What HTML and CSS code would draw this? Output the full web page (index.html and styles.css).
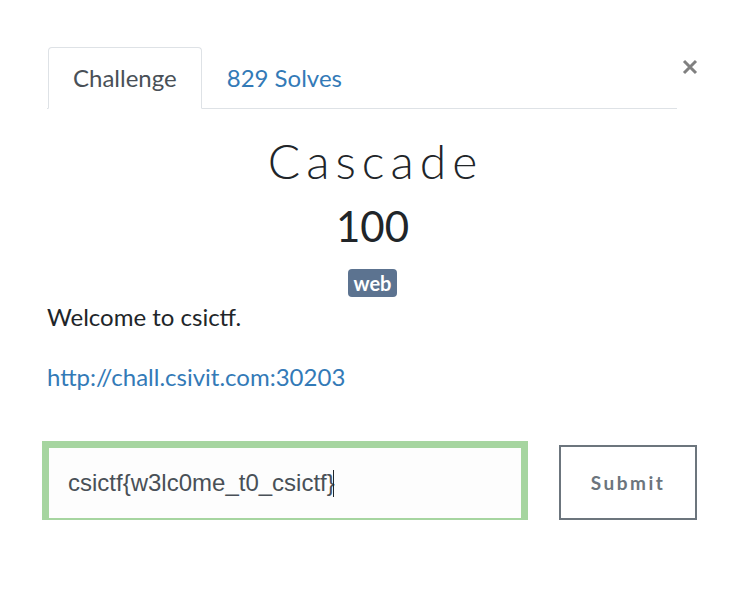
FILE: index.html
```html
<!doctype html>
<html lang="en">
<head>
  <meta charset="UTF-8">
  <title>Cascade</title>
  <link rel="stylesheet" href="styles.css">
</head>
<body>
  <div class="modal">
    <div class="modal-head">
      <ul class="nav-tabs">
        <li class="active"><a href="#challenge">Challenge</a></li>
        <li><a href="#solves">829 Solves</a></li>
      </ul>
      <button class="close" type="button" aria-label="Close">
        <svg width="16" height="16" viewBox="0 0 16 16">
          <path d="M2 2 L14 14 M14 2 L2 14" stroke="#808080" stroke-width="3" fill="none"/>
        </svg>
      </button>
    </div>

    <div class="chal">
      <h2 class="chal-name">Cascade</h2>
      <h3 class="chal-value">100</h3>
      <div class="chal-tags"><span class="badge">web</span></div>

      <div class="chal-desc">
        <p>Welcome to csictf.</p>
        <p class="conn"><a href="http://chall.csivit.com:30203">http://chall.csivit.com:30203</a></p>
      </div>

      <form class="submit-row" onsubmit="return false;">
        <div class="input-wrap">
          <input class="chal-input" type="text" value="csictf{w3lc0me_t0_csictf}">
          <span class="caret"></span>
        </div>
        <button class="chal-submit" type="submit">Submit</button>
      </form>
    </div>
  </div>
</body>
</html>
```

FILE: styles.css
```css
* {box-sizing: border-box;}
body {margin: 0; background: #fff; font-family: Lato, "Noto Sans", sans-serif; color: #212529;}

.modal {width: 651px; margin: 47px 0 0 47px;}

/* tabs + close */
.modal-head {display: flex; align-items: flex-start;}
.nav-tabs {flex: 1; display: flex; list-style: none; margin: 0; padding: 0 0 0 1px; border-bottom: 1px solid #dee2e6;}
.nav-tabs li {margin-bottom: -1px;}
.nav-tabs a {display: block; padding: 13px 24px 14px; font-size: 24px; line-height: 33px; color: #337ab7; text-decoration: none; border: 1px solid transparent; border-radius: 4px 4px 0 0;}
.nav-tabs .active a {color: #495057; background: #fff; border-color: #dee2e6 #dee2e6 #fff;}
.close {width: 21px; height: 40px; padding: 12px 0 0 3px; margin: 0; border: 0; background: none; display: flex; align-items: flex-start; justify-content: flex-end;}

/* challenge body */
.chal {text-align: center;}
.chal-name {margin: 24px 0 0; padding-left: 6px; font-size: 48px; line-height: 56px; font-weight: 300; letter-spacing: 6px;}
.chal-value {margin: 12px 0 0; font-size: 42px; line-height: 50px; font-weight: 400;}
.chal-tags {margin-top: 18px; line-height: 0;}
.badge {display: inline-block; padding: 4px 6px; font-size: 20px; line-height: 20px; font-weight: 700; color: #fff; background: #5c7390; border-radius: 4px;}

.chal-desc {text-align: left; font-size: 24px; line-height: 36px;}
.chal-desc p {margin: 2px 0 0;}
.chal-desc .conn {margin-top: 24px;}
.chal-desc a {color: #337ab7; text-decoration: none;}

.submit-row {display: flex; align-items: center; margin-top: 50px;}
.input-wrap {position: relative; display: flex;}
.chal-input {width: 476px; height: 74px; padding: 0 19px; border: 2px solid #a6d5a0; box-shadow: 0 0 0 5px #a6d5a0; outline: none; background: #fdfdfd; font-family: "Liberation Sans", Arial, sans-serif; font-size: 24px; color: #495057;}
.caret {position: absolute; left: 286px; top: 24px; width: 1px; height: 27px; background: #212529;}
.chal-submit {margin-left: 36px; width: 138px; height: 75px; border: 2px solid #6c757d; background: #fff; color: #6c757d; font-family: Lato, sans-serif; font-size: 19px; font-weight: 700; letter-spacing: 2.5px;}
```
